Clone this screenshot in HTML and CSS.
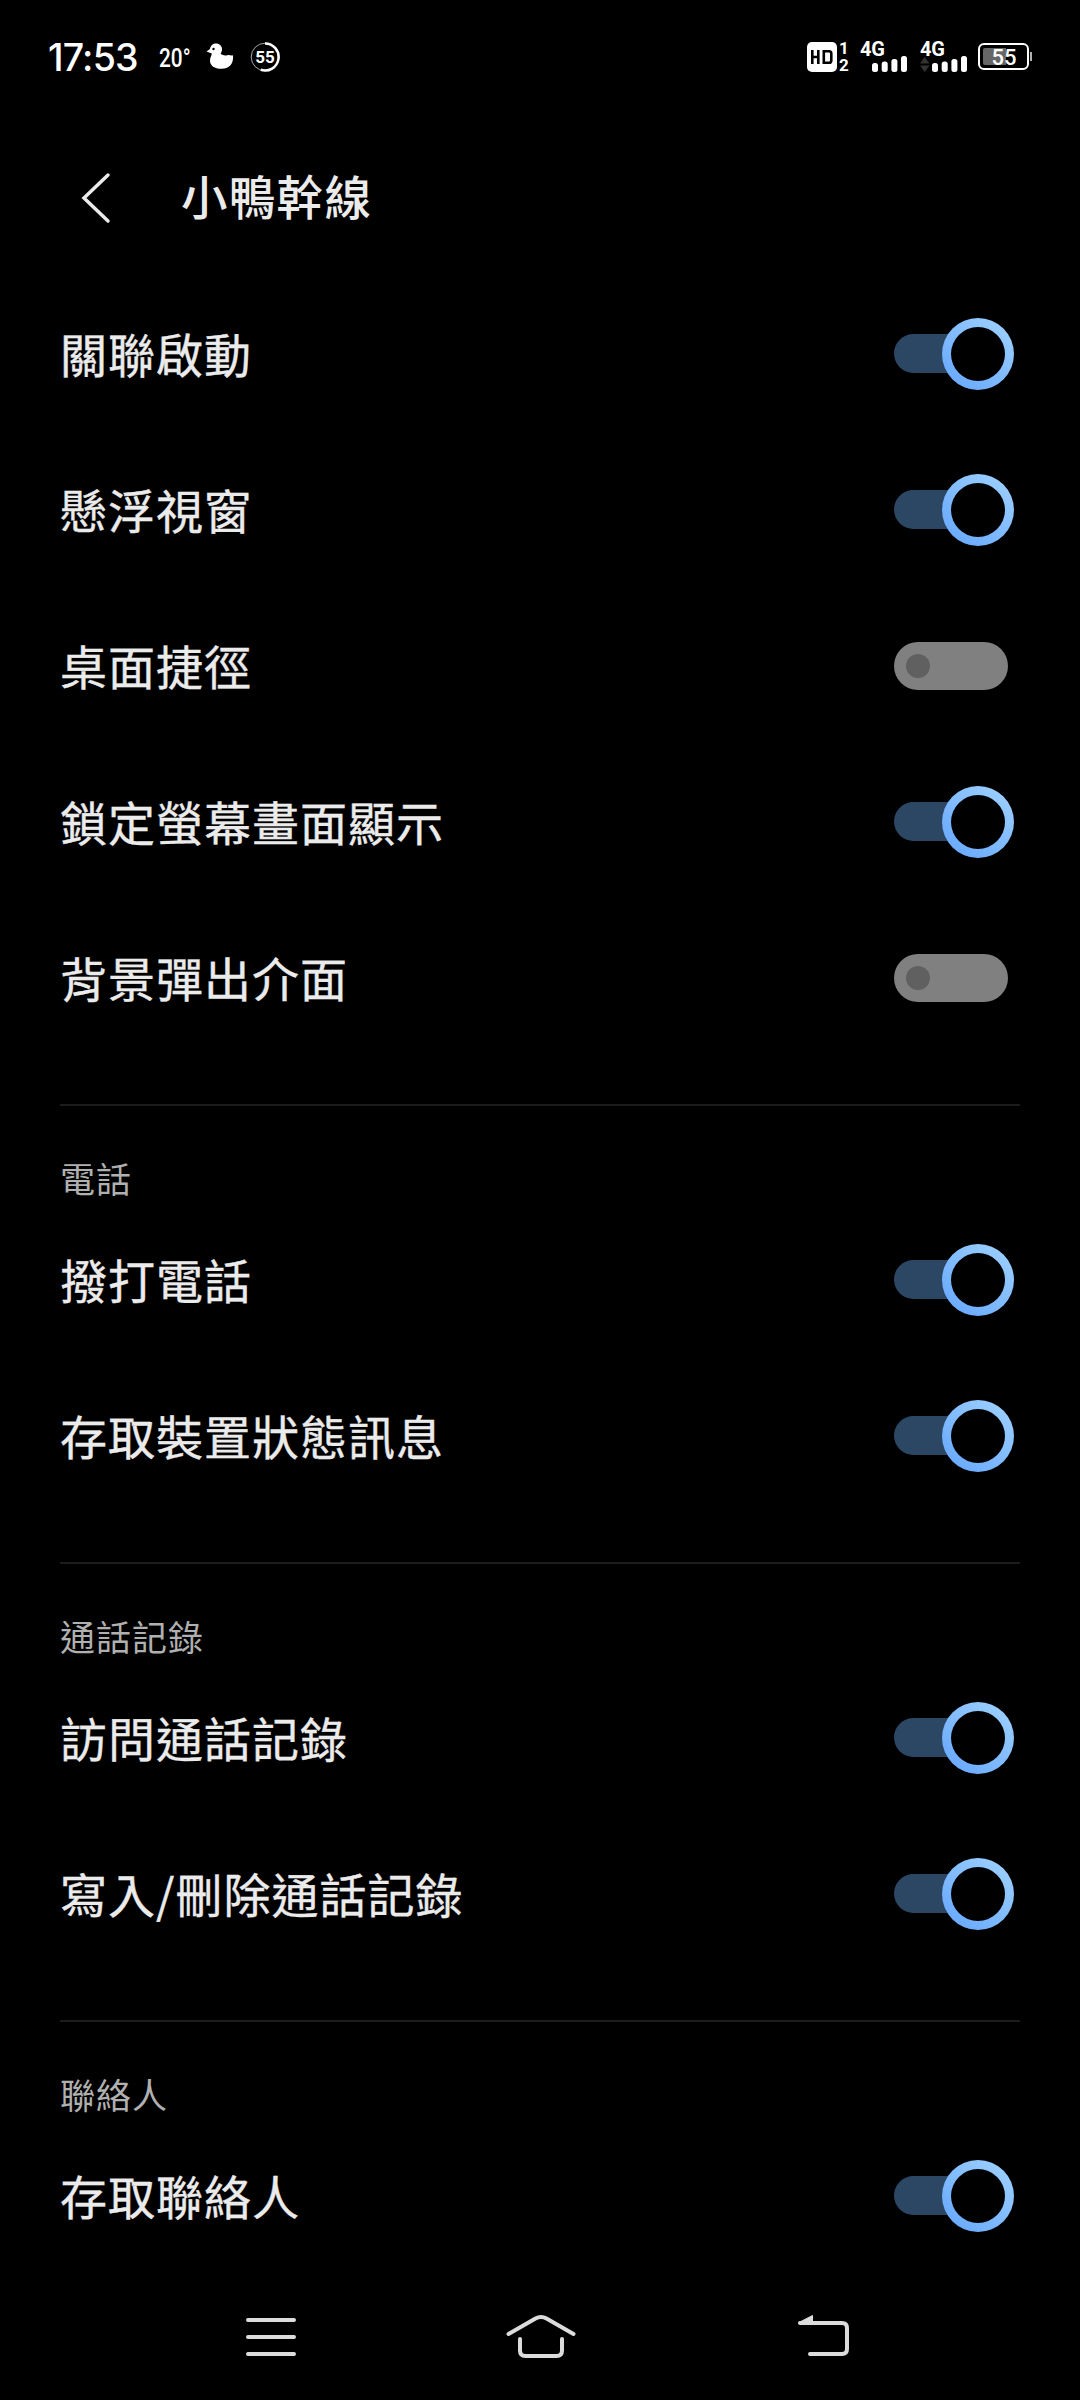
FILE: index.html
```html
<!DOCTYPE html>
<html lang="zh-Hant">
<head>
<meta charset="utf-8">
<title>小鴨幹線</title>
<link rel="stylesheet" href="styles.css">
</head>
<body>
<div class="screen">
  <div class="status">
    <span class="clock">17:53</span>
    <span class="temp">20°</span>
    <svg class="duck" width="28" height="28" viewBox="0 0 28 28"><path fill="#fff" d="M0.5 8.5 4 6C4.500 2.500 7 .5 10 .5c3.600 0 6 2.500 6 5.700 0 2-.8 3.300-1.400 4.600 2.200 1.800 4.600 2 6.800 1.400 2.200-.6 4 1 5.600 0 .8 7.800-3 13.600-11.500 13.600-7 0-11.500-3-11.500-8.300 0-3 1.500-4.500 1.800-7Z"/><circle cx="7.500" cy="6" r="1.200"/></svg>
    <span class="gauge"><svg width="30" height="30" viewBox="0 0 30 30" fill="none" stroke="#fff"><circle cx="15" cy="15" r="13.800" stroke-width="1" opacity=".65"/><path d="M15 1.500A13.500 13.500 0 1 1 10.800 27.800" stroke-width="2.600"/></svg><span class="gauge-text">55</span></span>
    <span class="status-gap"></span>
    <span class="hd"><svg width="30" height="30" viewBox="0 0 30 30"><rect width="30" height="30" rx="5" fill="#fff"/><path d="M5.300 8v14M11.300 8v14M5.300 15H11.300M16.800 9.300h5.200q2.300 0 2.300 2.300v6.800q0 2.300-2.300 2.300H16.800Z" fill="none" stroke="#000" stroke-width="2.600"/></svg></span>
    <span class="sims"><span>1</span><span>2</span></span>
    <span class="signal"><span class="net">4G</span><svg width="48" height="30" viewBox="0 0 48 30" fill="#fff"><rect x="12" y="21" width="6" height="9" rx="2.500"/><rect x="21.700" y="19.500" width="6" height="10.500" rx="2.500"/><rect x="31.400" y="17" width="6" height="13" rx="2.500"/><rect x="41" y="14" width="6" height="16" rx="2.500"/></svg></span>
    <span class="signal second"><span class="net">4G</span><svg width="48" height="30" viewBox="0 0 48 30" fill="#fff"><path fill="#333" d="m0 21.500 4.700-6.500 4.700 6.500ZM0 23.500h9.400L4.700 30Z"/><rect x="12" y="21" width="6" height="9" rx="2.500"/><rect x="21.700" y="19.500" width="6" height="10.500" rx="2.500"/><rect x="31.400" y="17" width="6" height="13" rx="2.500"/><rect x="41" y="14" width="6" height="16" rx="2.500"/></svg></span>
    <span class="battery"><svg width="54" height="28" viewBox="0 0 54 28"><rect x="1" y="1" width="49" height="25" rx="5" fill="none" stroke="#fff" stroke-width="2"/><path fill="#666" d="M7 5h21v17H7q-2 0-2-2V7q0-2 2-2Z"/><path d="M53 9v9" stroke="#ddd" stroke-width="1.600"/></svg><span class="battery-text">55</span></span>
  </div>

  <header class="header">
    <svg class="back" width="32" height="54" viewBox="0 0 32 54"><path d="M28 4 4 27 28 50" fill="none" stroke="#ebebeb" stroke-width="3.500" stroke-linecap="round"/></svg>
    <h1 class="title">小鴨幹線</h1>
  </header>

  <main class="list">
    <section class="group">
      <div class="row"><span class="label">關聯啟動</span><span class="switch on"><i class="knob"></i></span></div>
      <div class="row"><span class="label">懸浮視窗</span><span class="switch on"><i class="knob"></i></span></div>
      <div class="row"><span class="label">桌面捷徑</span><span class="switch off"><i class="dot"></i></span></div>
      <div class="row"><span class="label">鎖定螢幕畫面顯示</span><span class="switch on"><i class="knob"></i></span></div>
      <div class="row"><span class="label">背景彈出介面</span><span class="switch off"><i class="dot"></i></span></div>
    </section>
    <section class="group">
      <h2 class="heading">電話</h2>
      <div class="row"><span class="label">撥打電話</span><span class="switch on"><i class="knob"></i></span></div>
      <div class="row"><span class="label">存取裝置狀態訊息</span><span class="switch on"><i class="knob"></i></span></div>
    </section>
    <section class="group">
      <h2 class="heading">通話記錄</h2>
      <div class="row"><span class="label">訪問通話記錄</span><span class="switch on"><i class="knob"></i></span></div>
      <div class="row"><span class="label">寫入/刪除通話記錄</span><span class="switch on"><i class="knob"></i></span></div>
    </section>
    <section class="group">
      <h2 class="heading">聯絡人</h2>
      <div class="row"><span class="label">存取聯絡人</span><span class="switch on"><i class="knob"></i></span></div>
    </section>
  </main>

  <nav class="nav">
    <svg width="80" height="60" viewBox="0 0 80 60"><path d="M17 14H63M17 31H63M17 48H63"/></svg>
    <svg width="80" height="60" viewBox="0 0 80 60"><path d="M7.500 28 34.500 12.500Q40 9.500 45.500 12.500L72.500 28M19 33V44.500Q19 50 24.500 50H55.500Q61 50 61 44.500V33"/></svg>
    <svg width="80" height="60" viewBox="0 0 80 60"><path d="M29 17H71Q76 17 76 22V43Q76 48 71 48H39"/><path class="tip" d="M28 16.500 41.500 9.500V17.500Z"/></svg>
  </nav>
</div>
</body>
</html>
```
FILE: styles.css
```css
* { box-sizing: border-box; }
body {
  margin: 0;
  background: #000;
  color: #ebebeb;
  font-family: "Noto Sans CJK TC", sans-serif;
}
.screen {
  width: 1080px;
  height: 2400px;
  overflow: hidden;
  display: flex;
  flex-direction: column;
}
.status {
  height: 120px;
  padding: 0 48px 6px;
  display: flex;
  align-items: center;
  color: #fff;
  font-family: Inter, sans-serif;
  line-height: 1;
}
.clock { width: 111px; padding-top: 1px; font-size: 37.5px; font-weight: 500; white-space: nowrap; letter-spacing: -0.8px; }
.temp { width: 47px; padding-top: 1px; font: 500 26px/1 Roboto, sans-serif; transform: scaleX(.8); transform-origin: left; }
.duck { margin-right: 16px; }
.gauge, .battery { position: relative; display: flex; }
.gauge-text {
  position: absolute;
  inset: 0;
  font: 700 17px/31px Roboto, sans-serif;
  text-align: center;
}
.status-gap { flex: 1; }
.hd { display: flex; }
.sims {
  width: 14px;
  margin-right: 9px;
  display: flex;
  flex-direction: column;
  align-items: center;
  font: 700 17px/17px Roboto, sans-serif;
}
.signal { position: relative; display: flex; margin-right: 12px; }
.signal.second { margin-right: 10px; }
.net { position: absolute; left: 0; top: -2px; font: 700 20px/18px Roboto, sans-serif; letter-spacing: -.3px; }
.battery-text {
  position: absolute;
  left: 0;
  top: 0;
  width: 52px;
  font: 500 22px/30px Roboto, sans-serif;
  text-align: center;
}
.header {
  height: 156px;
  padding: 0 80px;
  display: flex;
  align-items: center;
}
.back { margin-right: 69px; }
.title {
  margin: 0;
  padding-bottom: 6px;
  font-size: 46.5px;
  font-weight: 500;
  letter-spacing: 1.3px;
  line-height: 60px;
}
.list { height: 1998px; }
.group { margin: 0 60px; padding-bottom: 48px; }
.group + .group { border-top: 2px solid #1c1c1c; }
.heading {
  height: 96px;
  margin: 0;
  padding-top: 47px;
  color: #b0b0b0;
  font-size: 35px;
  font-weight: 400;
  line-height: 50px;
  letter-spacing: 1px;
}
.row {
  height: 156px;
  display: flex;
  align-items: center;
  justify-content: space-between;
}
.label {
  padding-bottom: 3px;
  font-size: 47px;
  line-height: 60px;
  letter-spacing: 1px;
  -webkit-text-stroke: .4px #ebebeb;
}
.switch { display: flex; align-items: center; }
.switch.on { width: 120px; height: 72px; margin-right: 6px; }
.switch.on::before {
  content: "";
  width: 75px;
  height: 39px;
  margin: 0 -27px 1px 0;
  background: #2c4764;
  border-radius: 20px 0 0 20px;
}
.knob {
  position: relative;
  width: 72px;
  height: 72px;
  border: 9px solid transparent;
  border-radius: 50%;
  background: linear-gradient(#000, #000) padding-box, linear-gradient(40deg, #69a9ff 10%, #9bcfff 90%) border-box;
}
.switch.off {
  width: 114px;
  height: 48px;
  margin-right: 12px;
  padding-left: 12px;
  border-radius: 24px;
  background: #808080;
}
.dot { width: 24px; height: 24px; border-radius: 50%; background: #606060; }
.nav {
  height: 126px;
  padding: 0 229px 2px 231px;
  display: flex;
  align-items: center;
  justify-content: space-between;
}
.nav path { fill: none; stroke: #dcdcdc; stroke-width: 4; stroke-linecap: round; stroke-linejoin: round; }
.nav .tip { fill: #dcdcdc; stroke-width: 1; }
```
